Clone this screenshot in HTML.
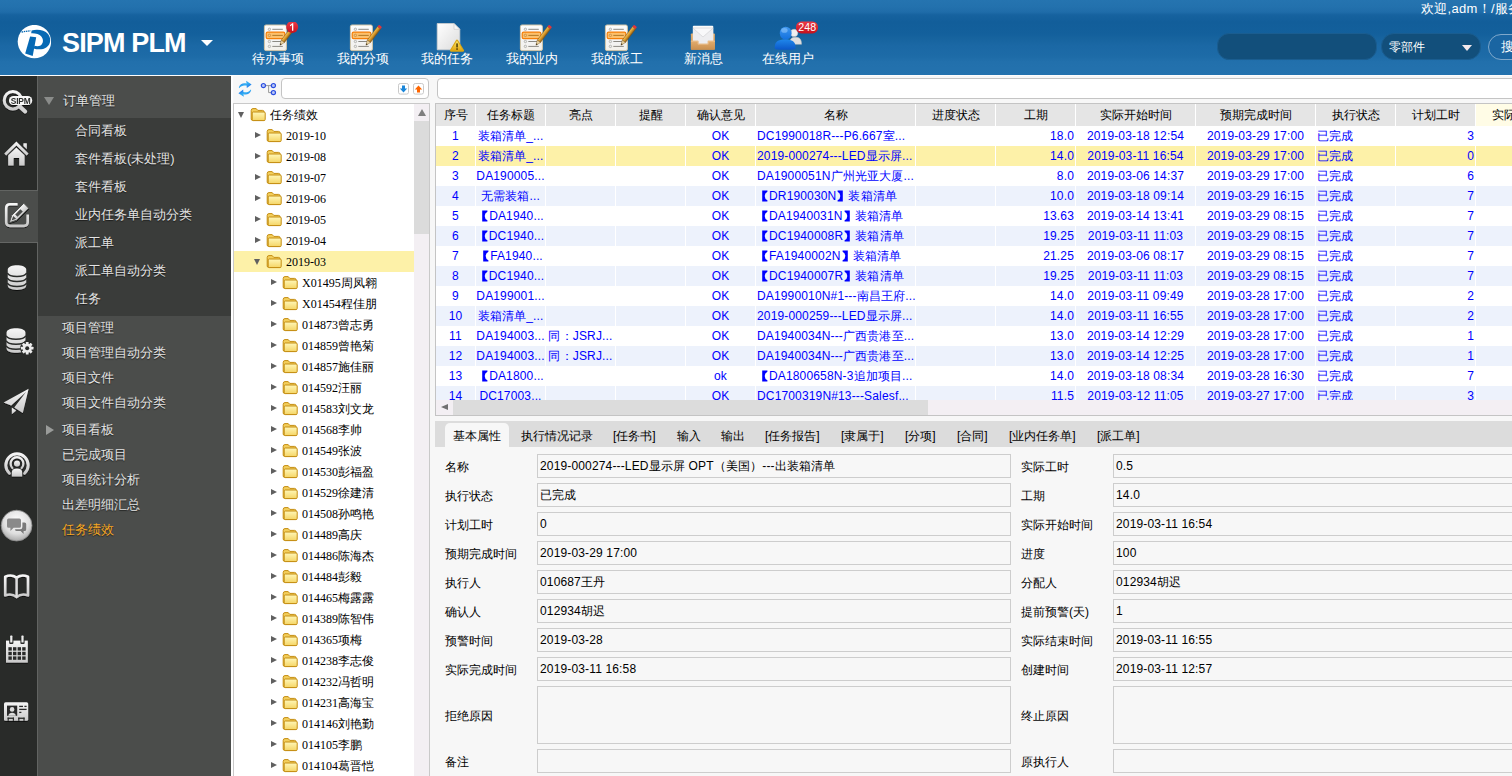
<!DOCTYPE html>
<html lang="zh">
<head>
<meta charset="utf-8">
<title>SIPM PLM</title>
<style>
*{box-sizing:border-box;margin:0;padding:0}
html,body{width:1512px;height:776px;overflow:hidden;background:#fff;font-family:"Liberation Sans",sans-serif;font-size:12px;color:#000}
.abs{position:absolute}
/* ---------- header ---------- */
#hdr{position:absolute;left:0;top:0;width:1512px;height:75px;
 background:linear-gradient(to bottom,#2574b0 0px,#2371ad 7px,#1f6ca9 12px,#16629f 15px,#125e9a 22px,#13609c 34px,#17649f 39px,#1b68a5 46px,#1d6ba7 56px,#2270ac 62px,#2472ae 75px);color:#fff;overflow:hidden}
#hdrline{position:absolute;left:0;top:75px;width:1512px;height:1px;background:#fdfdfd}
#logo{position:absolute;left:17px;top:25px;width:34px;height:34px}
#title{position:absolute;left:62px;top:25px;font-size:27px;font-weight:bold;letter-spacing:-.85px;line-height:36px;white-space:nowrap}
#titlearrow{position:absolute;left:201px;top:40px;width:0;height:0;border-left:6px solid transparent;border-right:6px solid transparent;border-top:6px solid #fff}
.tb{position:absolute;top:22px;width:84px;text-align:center;font-size:13px;line-height:16px;white-space:nowrap}
.tb svg{display:block;margin:0 auto}
.tb span{display:block;margin-top:-3px}
#welcome{position:absolute;left:1421px;top:1px;font-size:13px;line-height:16px;white-space:nowrap;letter-spacing:.3px}
#srch{position:absolute;left:1217px;top:33px;width:160px;height:27px;border-radius:12px;background:#124f7b;border:1px solid #1a5d90}
#sel{position:absolute;left:1381px;top:33px;width:100px;height:27px;border-radius:13px;background:#124f7b;border:1px solid #1a5d90;font-size:12px;line-height:26px;padding-left:7px}
#sel i{position:absolute;left:80px;top:11px;width:0;height:0;border-left:5px solid transparent;border-right:5px solid transparent;border-top:6px solid #f3e9ec}
#btn{position:absolute;left:1488px;top:34px;width:60px;height:26px;border-radius:13px;border:1px solid #7fa8cb;background:#1a65a2;font-size:13px;line-height:24px;padding-left:12px}
/* ---------- icon strip ---------- */
#strip{position:absolute;left:0;top:76px;width:38px;height:700px;background:#292b29;border-right:1px solid #626462}
#strip .act{position:absolute;left:0;top:114px;width:38px;height:53px;background:#4b4d4b;border-top:1px solid #626462;border-bottom:1px solid #646664}
#strip svg{position:absolute}
/* ---------- menu ---------- */
#menu{position:absolute;left:38px;top:76px;width:193px;height:700px;background:#4b4d4b;color:#e4e4e4;font-size:13px;text-shadow:0 1px 1px rgba(0,0,0,.6)}
#menu .h{position:absolute;left:24px;white-space:nowrap;line-height:18px}
#menu .sub{position:absolute;left:0;top:42px;width:193px;height:198px;background:#3a3c3a}
#menu .sub div{position:absolute;left:37px;white-space:nowrap;line-height:18px}
.tri-d{position:absolute;width:0;height:0;border-left:5px solid transparent;border-right:5px solid transparent;border-top:8px solid #8a8c8a}
.tri-r{position:absolute;width:0;height:0;border-top:5px solid transparent;border-bottom:5px solid transparent;border-left:8px solid #9a9c9a}

/* ---------- tree pane ---------- */
#tp{position:absolute;left:233px;top:76px;width:1279px;height:700px;background:#f7f7f7}
#ttb{position:absolute;left:0;top:0;width:197px;height:27px}
.inp{position:absolute;background:#fff;border:1px solid #c4c4c4;border-radius:4px}
#tree{position:absolute;left:233px;top:103px;width:197px;height:680px;background:#fff;border:1px solid #c9c9c9;overflow:hidden;font-family:"Liberation Serif","Liberation Sans",sans-serif;font-size:12px}
#tree .r{position:absolute;left:0;width:181px;height:21px;line-height:21px;white-space:nowrap}
#tree .r.sel{background:#fdf1a8}
#tree .r span{position:absolute;top:1px}
#tree .a{position:absolute;width:0;height:0}
#tree .a.d{border-left:3.5px solid transparent;border-right:3.5px solid transparent;border-top:6.5px solid #606060;top:8px}
#tree .a.rt{border-top:3.8px solid transparent;border-bottom:3.8px solid transparent;border-left:6.8px solid #606060;top:6.7px;margin-left:-.5px}
#tree svg{position:absolute;top:3px}
#vsb{position:absolute;left:180px;top:0;width:16px;height:680px;background:#f3eff3}
#vsb .th{position:absolute;left:0;top:17px;width:16px;height:113px;background:#dbdbdb}
#vsb .up{position:absolute;left:3.5px;top:5px;width:0;height:0;border-left:4px solid transparent;border-right:4px solid transparent;border-bottom:7px solid #7f7f7f}
/* ---------- grid ---------- */
#grid{position:absolute;left:435px;top:103px;width:1100px;height:313px;border:1px solid #c4c4c4;background:#fff;overflow:hidden}
#grid table{border-collapse:separate;border-spacing:0;table-layout:fixed;width:1120px;font-family:"Liberation Sans",sans-serif;font-size:12px;color:#00f}
#grid td,#grid th{border-right:1px solid #fff;height:20px;line-height:20px;padding:0 2px;white-space:nowrap;overflow:hidden;font-weight:normal;font-size:12px}
#grid th{height:22px;line-height:22px;background:#e5e5e5;color:#000;text-align:center;padding:0}
#grid th.y{background:#fffce6}
#grid tr.e td{background:#edf2fc}
#grid tr.s td{background:#fdf1a8}
.bk{width:12px;height:12px;vertical-align:-2px;fill:#00f}
.c{text-align:center}#grid td.rr{text-align:right;padding-right:1px}#grid td.l{text-align:left;padding-left:1px}
#grid td{letter-spacing:.15px}
#grid td.c{padding:0}
#hsb{position:absolute;left:0;top:296px;width:1100px;height:15px;background:#f3eff3}
#hsb .th{position:absolute;left:17px;top:0;width:475px;height:15px;background:#dcdcdc}
#hsb .lf{position:absolute;left:5px;top:4px;width:0;height:0;border-top:3.5px solid transparent;border-bottom:3.5px solid transparent;border-right:7px solid #707070}
/* ---------- tabs + form ---------- */
#tabs{position:absolute;left:435px;top:421px;width:1100px;height:26px;background:#dcdcdc;font-size:12px}
#tabs .on{position:absolute;left:10px;top:2px;width:64px;height:24px;background:#f7f7f7;border-radius:5px 5px 0 0}
#tabs span{position:absolute;top:0;line-height:30px;white-space:nowrap}
#form{position:absolute;left:435px;top:447px;width:1100px;height:329px;font-size:12px}
#form .lb{position:absolute;white-space:nowrap;line-height:16px}
#form .f{letter-spacing:.15px;position:absolute;height:24px;border:1px solid #cdcdcd;background:#f7f7f7;line-height:21px;padding-left:2px;padding-top:1px;white-space:nowrap;overflow:hidden}
</style>
</head>
<body>
<svg width="0" height="0" style="position:absolute">
 <defs>
  <linearGradient id="gpaper" x1="0" y1="0" x2="0" y2="1"><stop offset="0" stop-color="#fdfdfc"/><stop offset=".5" stop-color="#f3f5f8"/><stop offset="1" stop-color="#f4f1ea"/></linearGradient>
  <linearGradient id="gpencil" x1="0" y1="0" x2="1" y2="0"><stop offset="0" stop-color="#f2c25a"/><stop offset=".5" stop-color="#d99a2b"/><stop offset="1" stop-color="#8a5a17"/></linearGradient>
  <linearGradient id="gdoc" x1="0" y1="0" x2="1" y2="1"><stop offset="0" stop-color="#ffffff"/><stop offset="1" stop-color="#dcdcdc"/></linearGradient>
  <linearGradient id="gwarn" x1="0" y1="0" x2="0" y2="1"><stop offset="0" stop-color="#fbe86a"/><stop offset="1" stop-color="#e3a60f"/></linearGradient>
  <linearGradient id="gtray" x1="0" y1="0" x2="0" y2="1"><stop offset="0" stop-color="#e2ad6e"/><stop offset="1" stop-color="#c98f4f"/></linearGradient>
  <linearGradient id="guser" x1="0" y1="0" x2="0" y2="1"><stop offset="0" stop-color="#3f97ee"/><stop offset="1" stop-color="#1270de"/></linearGradient><linearGradient id="guser2" x1="0" y1="0" x2="0" y2="1"><stop offset="0" stop-color="#1f86ea"/><stop offset="1" stop-color="#0b57c8"/></linearGradient>
  <linearGradient id="gbadge" x1="0" y1="0" x2="0" y2="1"><stop offset="0" stop-color="#ee3b46"/><stop offset="1" stop-color="#c4121e"/></linearGradient>
  <linearGradient id="gi" x1="0" y1="0" x2="0" y2="1"><stop offset="0" stop-color="#f6f6f6"/><stop offset="1" stop-color="#c9c9c9"/></linearGradient>
  <radialGradient id="gchat" cx=".5" cy=".35" r=".7"><stop offset="0" stop-color="#ffffff"/><stop offset=".6" stop-color="#dedede"/><stop offset="1" stop-color="#9f9f9f"/></radialGradient>
  <filter id="sh" x="-20%" y="-20%" width="140%" height="150%"><feDropShadow dx="0" dy="1" stdDeviation=".6" flood-color="#000" flood-opacity=".7"/></filter>
  <linearGradient id="gfo" x1="0" y1="0" x2="0" y2="1"><stop offset="0" stop-color="#fff7b8"/><stop offset="1" stop-color="#f5d565"/></linearGradient>
  <symbol id="fold" viewBox="0 0 16 15"><path d="M1.2 3.4 Q1.2 1.6 3 1.6 H6.2 L7.8 3.4 H12.6 Q14 3.4 14 4.8 V12 Q14 13.4 12.6 13.4 H2.6 Q1.2 13.4 1.2 12 Z" fill="#f3cf5c" stroke="#c48d12" stroke-width="1"/><path d="M2.2 6 Q2.2 5 3.2 5 H14 Q15.2 5 15.2 6 V12.4 Q15.2 13.6 14 13.6 H3.2 Q2.2 13.6 2.2 12.4 Z" fill="url(#gfo)" stroke="#c48d12" stroke-width="1"/></symbol>
  <symbol id="note" viewBox="0 0 40 32">
   <rect x="2.4" y="3" width="22" height="25.6" rx="1.6" fill="url(#gpaper)" stroke="#d3c5a6" stroke-width="1"/>
   <rect x="4.2" y="10.1" width="18.6" height="6.6" rx="1.4" fill="#fcc06c" stroke="#f57f08" stroke-width="1.2"/>
   <g stroke="#8c8a84" stroke-width="1"><line x1="10.3" y1="7.3" x2="20.8" y2="7.3"/><line x1="10.3" y1="13.4" x2="20.8" y2="13.4" stroke="#b07a2a"/><line x1="10.3" y1="19.5" x2="20.8" y2="19.5"/><line x1="10.3" y1="24.4" x2="20.8" y2="24.4"/></g>
   <g fill="#ececec" stroke="#a9a9a4" stroke-width=".8"><circle cx="7.4" cy="7.3" r="1.2"/><circle cx="7.4" cy="13.4" r="1.2" fill="#f3c27e" stroke="#c98a3a"/><circle cx="7.4" cy="19.5" r="1.2"/><circle cx="7.4" cy="24.4" r="1.2"/></g>
   <g transform="translate(31.2,5.6) rotate(37)"><rect x="-2" y="0" width="4" height="17.2" fill="url(#gpencil)" stroke="#7a5216" stroke-width=".5"/><path d="M-2 17.2 L0 22 L2 17.2 Z" fill="#ecd6a6" stroke="#7a5216" stroke-width=".4"/><path d="M-.8 20.2 L0 22 L.8 20.2 Z" fill="#3a2a10"/><rect x="-2" y="-2.2" width="4" height="2.6" rx="1" fill="#e0343c"/></g>
  </symbol>
 </defs>
</svg>

<div id="hdr">
  <svg id="logo" viewBox="0 0 34 34"><circle cx="17.4" cy="16.6" r="16.7" fill="#fff"/><path d="M14.6 5.5 C20 4 27.6 4.8 31 9 C34.4 13.3 33.8 19.2 29.6 22.2 C25.8 24.9 20.5 24.7 16.6 23.4 L17.4 20.7 C21 21.9 24.6 21 25.7 17.4 C26.8 13.5 24 10.3 20.5 9 C18.5 8.3 16 8 14.2 8.2 Z" fill="#0669b4"/><path d="M13.1 11.4 L19.2 12.3 L15.7 31 L8.2 28.4 Z" fill="#0669b4"/><path d="M4.6 7 L13.6 5.7" stroke="#0669b4" stroke-width="1.3" stroke-dasharray="1.5 .7" fill="none"/></svg>
  <div id="title">SIPM PLM</div>
  <div id="titlearrow"></div>

  <div class="tb" style="left:236px"><svg width="40" height="32" style="margin-left:26px"><use href="#note"/><circle cx="30.2" cy="5.1" r="6" fill="url(#gbadge)"/><path d="M30.1 1.3 H31.3 V8.8 H30 V3 Q29.2 3.8 28 4.2 V3.1 Q29.4 2.5 30.1 1.3 Z" fill="#fff"/></svg><span>待办事项</span></div>
  <div class="tb" style="left:321px"><svg width="40" height="32" style="margin-left:27px"><use href="#note"/></svg><span>我的分项</span></div>
  <div class="tb" style="left:405px"><svg width="40" height="32" style="margin-left:26px" viewBox="0 0 40 32"><path d="M6.2 1.5 H23 L28.8 7.3 V27.8 H6.2 Z" fill="url(#gdoc)" stroke="#cfcfcf" stroke-width=".8"/><path d="M23 1.5 V7.3 H28.8 Z" fill="#f7f7f7" stroke="#c8c8c8" stroke-width=".6"/><path d="M26 18.6 L32 28.6 H20 Z" fill="url(#gwarn)" stroke="#d9a514" stroke-width="2.2" stroke-linejoin="round"/><path d="M26 18.6 L32 28.6 H20 Z" fill="url(#gwarn)"/><rect x="25.3" y="21.4" width="1.5" height="4" fill="#4a3806"/><rect x="25.3" y="26.3" width="1.5" height="1.5" fill="#4a3806"/></svg><span>我的任务</span></div>
  <div class="tb" style="left:490px"><svg width="40" height="32" style="margin-left:28px"><use href="#note"/></svg><span>我的业内</span></div>
  <div class="tb" style="left:575px"><svg width="40" height="32" style="margin-left:28px"><use href="#note"/></svg><span>我的派工</span></div>
  <div class="tb" style="left:661px"><svg width="40" height="32" style="margin-left:22px;overflow:visible" viewBox="0 0 40 32"><rect x="7.9" y="11.4" width="24" height="16.4" rx=".8" fill="url(#gtray)"/><rect x="9.9" y="3.7" width="20.3" height="18.6" rx=".8" fill="#fbfbfb"/><rect x="9.9" y="6" width="20.3" height="16" fill="#ededf0"/><path d="M9.9 6 L20 15 L30.2 6 Z" fill="#f8f8fa" stroke="#d2d2d6" stroke-width=".7"/><path d="M7.9 18.8 H15.4 V21.8 H24.8 V18.8 H31.9 V27 Q31.9 27.8 31.1 27.8 H8.7 Q7.9 27.8 7.9 27 Z" fill="url(#gtray)"/><path d="M7.9 19.2 H15 V22.2 H25.2 V19.2 H31.9" fill="none" stroke="#edc392" stroke-width=".8"/></svg><span>新消息</span></div>
  <div class="tb" style="left:746px"><svg width="52" height="32" style="margin-left:26px;overflow:visible" viewBox="0 0 52 32"><circle cx="22.1" cy="10.9" r="3.7" fill="#f0f0f0" stroke="#c4c4c4" stroke-width=".5"/><path d="M17.6 22.3 C17.6 17 19.5 15.3 23.5 15.3 C27.5 15.3 29.5 17 29.5 22.3 Z" fill="#e0e0e0" stroke="#bcbcbc" stroke-width=".5"/><ellipse cx="13.7" cy="11.2" rx="5.9" ry="6.5" fill="url(#guser)"/><path d="M2.7 26 C2.7 19.5 6 17.6 13.2 17.6 C20.4 17.6 23.6 19.5 23.6 26 C23.6 27.3 21 27.8 13.2 27.8 C5.4 27.8 2.7 27.3 2.7 26 Z" fill="url(#guser2)"/><ellipse cx="12.4" cy="8.4" rx="3.2" ry="2.4" fill="#8fc6fb" opacity=".6"/><rect x="24" y="-.6" width="22" height="12" rx="5.5" fill="url(#gbadge)"/><text x="35.2" y="9" font-size="10.6" style="font-family:'Liberation Sans',sans-serif" fill="#fff" text-anchor="middle">248</text></svg><span>在线用户</span></div>
  <div id="welcome">欢迎,adm！/服务</div>
  <div id="srch"></div>
  <div id="sel">零部件<i></i></div>
  <div id="btn">搜</div>
</div>
<div id="hdrline"></div>

<div id="strip"><div class="act"></div>
 <!-- search SIPM : page y 87-116 -->
 <svg style="left:0;top:10px" width="38" height="32" viewBox="0 0 38 32" filter="url(#sh)"><circle cx="12.9" cy="14.2" r="8.7" fill="none" stroke="url(#gi)" stroke-width="3"/><line x1="19.8" y1="20.6" x2="25.2" y2="25.4" stroke="#d4d4d4" stroke-width="4" stroke-linecap="round"/><rect x="9" y="10" width="23.2" height="9" rx="4.5" fill="#f8f8f8"/><text x="20.6" y="17.5" font-size="8.4" font-weight="bold" text-anchor="middle" fill="#2b2d2b" style="font-family:'Liberation Sans',sans-serif;letter-spacing:-.2px">SIPM</text></svg>
 <!-- home : y 141-166 -->
 <svg style="left:2px;top:62px" width="32" height="32" viewBox="0 0 32 32" filter="url(#sh)"><path d="M2.2 15.6 L14.4 3.6 L26.6 15.6 L24.6 17.6 L14.4 7.6 L4.2 17.6 Z" fill="url(#gi)"/><path d="M6.2 17.2 L14.4 9.4 L22.6 17.2 V27.6 H17.2 V20 H11.6 V27.6 H6.2 Z" fill="url(#gi)"/><path d="M21.4 5.2 H24.8 V11.2 L21.4 7.9 Z" fill="url(#gi)"/></svg>
 <!-- edit : y 203-228 -->
 <svg style="left:2px;top:124px" width="32" height="32" viewBox="0 0 32 32" filter="url(#sh)"><path d="M15.6 4.3 H8 Q4.2 4.3 4.2 8.1 V22.1 Q4.2 25.9 8 25.9 H21.9 Q25.7 25.9 25.7 22.1 V14.6" fill="none" stroke="url(#gi)" stroke-width="2.6" stroke-linecap="butt"/><g transform="translate(7.3,22.7) rotate(-45)"><path d="M0 0 L7 -3.5 H24 V3.5 H7 Z" fill="url(#gi)" stroke="#4b4d4b" stroke-width=".9"/><path d="M3.2 0 L7.6 -2 V2 Z" fill="#4b4d4b"/><rect x="10" y="-1.7" width="7.4" height="3.4" fill="#4b4d4b"/></g></svg>
 <!-- db : y 265-290 -->
 <svg style="left:2px;top:186px" width="32" height="32" viewBox="0 0 32 32"><g filter="url(#sh)"><path d="M5.8 7.6 C5.8 1.8 24.2 1.8 24.2 7.6 V23.6 C24.2 29.4 5.8 29.4 5.8 23.6 Z" fill="url(#gi)"/></g><g fill="none" stroke="#292b29" stroke-width="1.4"><path d="M5.4 11 C7.4 15.6 22.6 15.6 24.6 11"/><path d="M5.4 16 C7.4 20.6 22.6 20.6 24.6 16"/><path d="M5.4 21 C7.4 25.6 22.6 25.6 24.6 21"/></g></svg>
 <!-- db gear : y 328-354 -->
 <svg style="left:2px;top:249px" width="34" height="32" viewBox="0 0 34 32"><g filter="url(#sh)"><path d="M4.6 7.4 C4.6 1.8 23.4 1.8 23.4 7.4 V23.4 C23.4 29.2 4.6 29.2 4.6 23.4 Z" fill="url(#gi)"/></g><g fill="none" stroke="#292b29" stroke-width="1.4"><path d="M4.2 10.8 C6.2 15.4 21.8 15.4 23.8 10.8"/><path d="M4.2 15.8 C6.2 20.4 21.8 20.4 23.8 15.8"/><path d="M4.2 20.8 C6.2 25.4 21.8 25.4 23.8 20.8"/></g><g transform="translate(25.2,23.2)"><circle r="7" fill="#292b29"/><g fill="#ececec"><circle r="4.5"/><g id="t"><rect x="-1.4" y="-6.3" width="2.8" height="12.6" rx=".5"/></g><use href="#t" transform="rotate(45)"/><use href="#t" transform="rotate(90)"/><use href="#t" transform="rotate(135)"/></g><circle r="2" fill="#292b29"/></g></svg>
 <!-- plane : y 389-414 -->
 <svg style="left:1.3px;top:309px" width="32" height="32" viewBox="0 0 32 32" filter="url(#sh)"><path d="M2.6 17.6 L27.6 3.8 L21.8 28 L13.2 22.4 L25.2 6.8 L10.2 20.6 Z" fill="url(#gi)"/><path d="M10.8 22.6 L15.2 25.4 L10.8 29.2 Z" fill="url(#gi)"/></svg>
 <!-- broadcast : y 451-476 -->
 <svg style="left:2px;top:372px" width="32" height="32" viewBox="0 0 32 32" filter="url(#sh)"><path d="M7.4 25.2 A11.2 11.2 0 1 1 22.6 25.2" fill="none" stroke="url(#gi)" stroke-width="2.9" stroke-linecap="round"/><path d="M10.4 20 A6.4 6.4 0 1 1 19.6 20" fill="none" stroke="url(#gi)" stroke-width="2.2" stroke-linecap="round"/><circle cx="15" cy="15.4" r="3" fill="url(#gi)"/><path d="M9.8 28.4 V24.4 Q9.8 20.6 15 20.6 Q20.2 20.6 20.2 24.4 V28.4 Z" fill="url(#gi)"/></svg>
 <!-- chat round : y 510-540 -->
 <svg style="left:0;top:433px" width="36" height="34" viewBox="0 0 36 34"><circle cx="16.6" cy="16.6" r="15.4" fill="url(#gchat)" stroke="#8a8a8a" stroke-width=".8"/><path d="M8.6 9.6 H19.4 Q21 9.6 21 11.2 V17.2 Q21 18.8 19.4 18.8 H13.6 L10.4 22 V18.8 H8.6 Q7 18.8 7 17.2 V11.2 Q7 9.6 8.6 9.6 Z" fill="#8a8a8a"/><path d="M22.4 13.4 H24.6 Q26.2 13.4 26.2 15 V20.4 Q26.2 22 24.6 22 H23.6 V25 L20.6 22 H16.4 Q15 22 14.8 20.6 L16 20.2 H20.2 Q22.4 20.2 22.4 18 Z" fill="#7a7a7a"/></svg>
 <!-- book : y 575-599 -->
 <svg style="left:2px;top:496px" width="32" height="32" viewBox="0 0 32 32" filter="url(#sh)"><path d="M3.2 4.6 C7 3 11.6 3.4 14.6 5.6 C17.6 3.4 22.2 3 26 4.6 V23.4 C22.2 22 17.6 22.6 14.6 25 C11.6 22.6 7 22 3.2 23.4 Z" fill="none" stroke="url(#gi)" stroke-width="2.6" stroke-linejoin="round"/><line x1="14.6" y1="5.6" x2="14.6" y2="24.6" stroke="#dedede" stroke-width="2.4"/><path d="M13 24 L14.6 26.6 L16.2 24 Z" fill="#ddd"/></svg>
 <!-- calendar : y 636-663 -->
 <svg style="left:2px;top:558px" width="32" height="32" viewBox="0 0 32 32" filter="url(#sh)"><path d="M4 6.6 H25.8 V28.6 H4 Z" fill="url(#gi)"/><g fill="#292b29"><rect x="7.2" y="2.4" width="4.2" height="7.6" rx="1"/><rect x="18.4" y="2.4" width="4.2" height="7.6" rx="1"/></g><g fill="#ededed"><rect x="8.2" y="1.6" width="2.2" height="7" rx=".6"/><rect x="19.4" y="1.6" width="2.2" height="7" rx=".6"/></g><g fill="#292b29"><rect x="6.4" y="13.2" width="3.4" height="3.4"/><rect x="11" y="13.2" width="3.4" height="3.4"/><rect x="15.6" y="13.2" width="3.4" height="3.4"/><rect x="20.2" y="13.2" width="3.4" height="3.4"/><rect x="6.4" y="17.8" width="3.4" height="3.4"/><rect x="11" y="17.8" width="3.4" height="3.4"/><rect x="15.6" y="17.8" width="3.4" height="3.4"/><rect x="20.2" y="17.8" width="3.4" height="3.4"/><rect x="6.4" y="22.4" width="3.4" height="3.4"/><rect x="11" y="22.4" width="3.4" height="3.4"/><rect x="15.6" y="22.4" width="3.4" height="3.4"/><rect x="20.2" y="22.4" width="3.4" height="3.4"/></g></svg>
 <!-- id card : y 702-721 -->
 <svg style="left:2px;top:620px" width="32" height="32" viewBox="0 0 32 32" filter="url(#sh)"><rect x="2" y="6.2" width="24.2" height="18.6" rx="1.6" fill="url(#gi)"/><rect x="5" y="9.6" width="10.2" height="10.2" fill="#292b29"/><circle cx="10.1" cy="13.4" r="2.3" fill="#dcdcdc"/><path d="M6.4 19.8 C6.4 15.8 13.8 15.8 13.8 19.8 Z" fill="#dcdcdc"/><g stroke="#292b29" stroke-width="1.3"><line x1="17.2" y1="10.4" x2="21" y2="10.4"/><line x1="22.4" y1="10.4" x2="24.6" y2="10.4"/><line x1="17.2" y1="13.4" x2="24.6" y2="13.4"/><line x1="17.2" y1="16.4" x2="19.4" y2="16.4"/></g><g fill="#292b29"><rect x="5.6" y="21.6" width="6.4" height="1.3"/><rect x="5.6" y="21.6" width="1.2" height="3.2"/><rect x="10.8" y="21.6" width="1.2" height="3.2"/><rect x="16.2" y="21.6" width="6.4" height="1.3"/><rect x="16.2" y="21.6" width="1.2" height="3.2"/><rect x="21.4" y="21.6" width="1.2" height="3.2"/></g></svg>
</div>

<div id="menu">
  <i class="tri-d" style="left:6px;top:21px"></i>
  <div class="h" style="top:16px;left:25px">订单管理</div>
  <div class="sub">
    <div style="top:4px">合同看板</div>
    <div style="top:32px">套件看板(未处理)</div>
    <div style="top:60px">套件看板</div>
    <div style="top:88px">业内任务单自动分类</div>
    <div style="top:116px">派工单</div>
    <div style="top:144px">派工单自动分类</div>
    <div style="top:172px">任务</div>
  </div>
  <div class="h" style="top:243px">项目管理</div>
  <div class="h" style="top:268px">项目管理自动分类</div>
  <div class="h" style="top:293px">项目文件</div>
  <div class="h" style="top:318px">项目文件自动分类</div>
  <i class="tri-r" style="left:8px;top:349px"></i>
  <div class="h" style="top:345px">项目看板</div>
  <div class="h" style="top:370px">已完成项目</div>
  <div class="h" style="top:395px">项目统计分析</div>
  <div class="h" style="top:420px">出差明细汇总</div>
  <div class="h" style="top:445px;color:#f5a623">任务绩效</div>
</div>

<div id="tp">
 <div id="ttb">
  <svg style="position:absolute;left:4px;top:4px" width="16" height="18" viewBox="0 0 16 18"><defs><linearGradient id="grf" x1="0" y1="0" x2="1" y2="1"><stop offset="0" stop-color="#1a5cee"/><stop offset=".5" stop-color="#34b2f2"/><stop offset="1" stop-color="#1a5cee"/></linearGradient></defs><path d="M1.8 7.6 C2.6 3.6 6.6 2.6 9.6 3.4 L9.2 .8 L14.6 4.4 L9.8 8 L9.6 5.6 C6.8 5 4 5.6 2.2 8.2 Z" fill="url(#grf)"/><path d="M14.2 10 C13.4 14 9.4 15 6.4 14.2 L6.8 16.8 L1.4 13.2 L6.2 9.6 L6.4 12 C9.2 12.6 12 12 13.8 9.4 Z" fill="url(#grf)"/></svg>
  <svg style="position:absolute;left:27px;top:5px" width="18" height="16" viewBox="0 0 18 16"><path d="M4 4.6 H13 M8.6 4.6 V11.6 H13" fill="none" stroke="#9a9a9a" stroke-width="1"/><g fill="#b9c6f6" stroke="#2b4fe0" stroke-width="1.2"><circle cx="3.4" cy="4.6" r="2.1"/><circle cx="13.4" cy="4.6" r="2.1"/><circle cx="13.4" cy="11.6" r="2.1"/></g></svg>
  <div class="inp" style="left:48px;top:2px;width:148px;height:21px"></div>
  <svg style="position:absolute;left:165px;top:7px" width="26" height="12" viewBox="0 0 26 12"><rect x=".5" y=".5" width="10" height="10.6" rx="1.8" fill="#fff" stroke="#c9c9c9"/><path d="M4 2.4 H7 V5.4 H9.2 L5.5 9.4 L1.8 5.4 H4 Z" fill="#1a86d9"/><rect x="15.5" y=".5" width="10" height="10.6" rx="1.8" fill="#fff" stroke="#c9c9c9"/><path d="M19 9.4 H22 V6.4 H24.2 L20.5 2.4 L16.8 6.4 H19 Z" fill="#ff6600"/></svg>
 </div>
 <div class="inp" style="left:204px;top:2px;width:1100px;height:21px"></div>
</div>
<div id="tree">
<div class="r" style="top:0px"><i class="a d" style="left:4px"></i><svg width="16" height="15" viewBox="0 0 16 15" style="left:16px"><use href="#fold"/></svg><span style="left:36px">任务绩效</span></div>
<div class="r" style="top:21px"><i class="a rt" style="left:21px"></i><svg width="16" height="15" viewBox="0 0 16 15" style="left:32px"><use href="#fold"/></svg><span style="left:52px">2019-10</span></div>
<div class="r" style="top:42px"><i class="a rt" style="left:21px"></i><svg width="16" height="15" viewBox="0 0 16 15" style="left:32px"><use href="#fold"/></svg><span style="left:52px">2019-08</span></div>
<div class="r" style="top:63px"><i class="a rt" style="left:21px"></i><svg width="16" height="15" viewBox="0 0 16 15" style="left:32px"><use href="#fold"/></svg><span style="left:52px">2019-07</span></div>
<div class="r" style="top:84px"><i class="a rt" style="left:21px"></i><svg width="16" height="15" viewBox="0 0 16 15" style="left:32px"><use href="#fold"/></svg><span style="left:52px">2019-06</span></div>
<div class="r" style="top:105px"><i class="a rt" style="left:21px"></i><svg width="16" height="15" viewBox="0 0 16 15" style="left:32px"><use href="#fold"/></svg><span style="left:52px">2019-05</span></div>
<div class="r" style="top:126px"><i class="a rt" style="left:21px"></i><svg width="16" height="15" viewBox="0 0 16 15" style="left:32px"><use href="#fold"/></svg><span style="left:52px">2019-04</span></div>
<div class="r sel" style="top:147px"><i class="a d" style="left:20px"></i><svg width="16" height="15" viewBox="0 0 16 15" style="left:32px"><use href="#fold"/></svg><span style="left:52px">2019-03</span></div>
<div class="r" style="top:168px"><i class="a rt" style="left:37px"></i><svg width="16" height="15" viewBox="0 0 16 15" style="left:48px"><use href="#fold"/></svg><span style="left:68px">X01495周凤翱</span></div>
<div class="r" style="top:189px"><i class="a rt" style="left:37px"></i><svg width="16" height="15" viewBox="0 0 16 15" style="left:48px"><use href="#fold"/></svg><span style="left:68px">X01454程佳朋</span></div>
<div class="r" style="top:210px"><i class="a rt" style="left:37px"></i><svg width="16" height="15" viewBox="0 0 16 15" style="left:48px"><use href="#fold"/></svg><span style="left:68px">014873曾志勇</span></div>
<div class="r" style="top:231px"><i class="a rt" style="left:37px"></i><svg width="16" height="15" viewBox="0 0 16 15" style="left:48px"><use href="#fold"/></svg><span style="left:68px">014859曾艳菊</span></div>
<div class="r" style="top:252px"><i class="a rt" style="left:37px"></i><svg width="16" height="15" viewBox="0 0 16 15" style="left:48px"><use href="#fold"/></svg><span style="left:68px">014857施佳丽</span></div>
<div class="r" style="top:273px"><i class="a rt" style="left:37px"></i><svg width="16" height="15" viewBox="0 0 16 15" style="left:48px"><use href="#fold"/></svg><span style="left:68px">014592汪丽</span></div>
<div class="r" style="top:294px"><i class="a rt" style="left:37px"></i><svg width="16" height="15" viewBox="0 0 16 15" style="left:48px"><use href="#fold"/></svg><span style="left:68px">014583刘文龙</span></div>
<div class="r" style="top:315px"><i class="a rt" style="left:37px"></i><svg width="16" height="15" viewBox="0 0 16 15" style="left:48px"><use href="#fold"/></svg><span style="left:68px">014568李帅</span></div>
<div class="r" style="top:336px"><i class="a rt" style="left:37px"></i><svg width="16" height="15" viewBox="0 0 16 15" style="left:48px"><use href="#fold"/></svg><span style="left:68px">014549张波</span></div>
<div class="r" style="top:357px"><i class="a rt" style="left:37px"></i><svg width="16" height="15" viewBox="0 0 16 15" style="left:48px"><use href="#fold"/></svg><span style="left:68px">014530彭福盈</span></div>
<div class="r" style="top:378px"><i class="a rt" style="left:37px"></i><svg width="16" height="15" viewBox="0 0 16 15" style="left:48px"><use href="#fold"/></svg><span style="left:68px">014529徐建清</span></div>
<div class="r" style="top:399px"><i class="a rt" style="left:37px"></i><svg width="16" height="15" viewBox="0 0 16 15" style="left:48px"><use href="#fold"/></svg><span style="left:68px">014508孙鸣艳</span></div>
<div class="r" style="top:420px"><i class="a rt" style="left:37px"></i><svg width="16" height="15" viewBox="0 0 16 15" style="left:48px"><use href="#fold"/></svg><span style="left:68px">014489高庆</span></div>
<div class="r" style="top:441px"><i class="a rt" style="left:37px"></i><svg width="16" height="15" viewBox="0 0 16 15" style="left:48px"><use href="#fold"/></svg><span style="left:68px">014486陈海杰</span></div>
<div class="r" style="top:462px"><i class="a rt" style="left:37px"></i><svg width="16" height="15" viewBox="0 0 16 15" style="left:48px"><use href="#fold"/></svg><span style="left:68px">014484彭毅</span></div>
<div class="r" style="top:483px"><i class="a rt" style="left:37px"></i><svg width="16" height="15" viewBox="0 0 16 15" style="left:48px"><use href="#fold"/></svg><span style="left:68px">014465梅露露</span></div>
<div class="r" style="top:504px"><i class="a rt" style="left:37px"></i><svg width="16" height="15" viewBox="0 0 16 15" style="left:48px"><use href="#fold"/></svg><span style="left:68px">014389陈智伟</span></div>
<div class="r" style="top:525px"><i class="a rt" style="left:37px"></i><svg width="16" height="15" viewBox="0 0 16 15" style="left:48px"><use href="#fold"/></svg><span style="left:68px">014365项梅</span></div>
<div class="r" style="top:546px"><i class="a rt" style="left:37px"></i><svg width="16" height="15" viewBox="0 0 16 15" style="left:48px"><use href="#fold"/></svg><span style="left:68px">014238李志俊</span></div>
<div class="r" style="top:567px"><i class="a rt" style="left:37px"></i><svg width="16" height="15" viewBox="0 0 16 15" style="left:48px"><use href="#fold"/></svg><span style="left:68px">014232冯哲明</span></div>
<div class="r" style="top:588px"><i class="a rt" style="left:37px"></i><svg width="16" height="15" viewBox="0 0 16 15" style="left:48px"><use href="#fold"/></svg><span style="left:68px">014231高海宝</span></div>
<div class="r" style="top:609px"><i class="a rt" style="left:37px"></i><svg width="16" height="15" viewBox="0 0 16 15" style="left:48px"><use href="#fold"/></svg><span style="left:68px">014146刘艳勤</span></div>
<div class="r" style="top:630px"><i class="a rt" style="left:37px"></i><svg width="16" height="15" viewBox="0 0 16 15" style="left:48px"><use href="#fold"/></svg><span style="left:68px">014105李鹏</span></div>
<div class="r" style="top:651px"><i class="a rt" style="left:37px"></i><svg width="16" height="15" viewBox="0 0 16 15" style="left:48px"><use href="#fold"/></svg><span style="left:68px">014104葛晋恺</span></div>
 <div id="vsb"><div class="th"></div><i class="up"></i></div>
</div>
<div id="grid"><table cellspacing="0" cellpadding="0"><colgroup><col style="width:40px"><col style="width:70px"><col style="width:70px"><col style="width:70px"><col style="width:70px"><col style="width:160px"><col style="width:80px"><col style="width:80px"><col style="width:120px"><col style="width:120px"><col style="width:80px"><col style="width:80px"><col style="width:80px"></colgroup><tr><th>序号</th><th>任务标题</th><th>亮点</th><th>提醒</th><th>确认意见</th><th>名称</th><th>进度状态</th><th>工期</th><th>实际开始时间</th><th>预期完成时间</th><th>执行状态</th><th>计划工时</th><th class="y">实际工时</th></tr><tr><td class="c">1</td><td class="c">装箱清单_...</td><td class="c"></td><td class="c"></td><td class="c">OK</td><td class="l">DC1990018R---P6.667室...</td><td class="c"></td><td class="rr">18.0</td><td class="c">2019-03-18 12:54</td><td class="c">2019-03-29 17:00</td><td class="l">已完成</td><td class="rr">3</td><td class="rr"></td></tr><tr class="s"><td class="c">2</td><td class="c">装箱清单_...</td><td class="c"></td><td class="c"></td><td class="c">OK</td><td class="l">2019-000274---LED显示屏...</td><td class="c"></td><td class="rr">14.0</td><td class="c">2019-03-11 16:54</td><td class="c">2019-03-29 17:00</td><td class="l">已完成</td><td class="rr">0</td><td class="rr"></td></tr><tr><td class="c">3</td><td class="c">DA190005...</td><td class="c"></td><td class="c"></td><td class="c">OK</td><td class="l">DA1900051N广州光亚大厦...</td><td class="c"></td><td class="rr">8.0</td><td class="c">2019-03-06 14:37</td><td class="c">2019-03-29 17:00</td><td class="l">已完成</td><td class="rr">6</td><td class="rr"></td></tr><tr class="e"><td class="c">4</td><td class="c">无需装箱...</td><td class="c"></td><td class="c"></td><td class="c">OK</td><td class="l"><svg class="bk" viewBox="0 0 12 12"><path d="M5.2 .6 H10.4 V1.7 Q7.7 3.1 7.7 6 Q7.7 8.9 10.4 10.3 V11.4 H5.2 Z"/></svg>DR190030N<svg class="bk" viewBox="0 0 12 12"><path d="M6.8 .6 H1.6 V1.7 Q4.3 3.1 4.3 6 Q4.3 8.9 1.6 10.3 V11.4 H6.8 Z"/></svg>装箱清单</td><td class="c"></td><td class="rr">10.0</td><td class="c">2019-03-18 09:14</td><td class="c">2019-03-29 16:15</td><td class="l">已完成</td><td class="rr">7</td><td class="rr"></td></tr><tr><td class="c">5</td><td class="c"><svg class="bk" viewBox="0 0 12 12"><path d="M5.2 .6 H10.4 V1.7 Q7.7 3.1 7.7 6 Q7.7 8.9 10.4 10.3 V11.4 H5.2 Z"/></svg>DA1940...</td><td class="c"></td><td class="c"></td><td class="c">OK</td><td class="l"><svg class="bk" viewBox="0 0 12 12"><path d="M5.2 .6 H10.4 V1.7 Q7.7 3.1 7.7 6 Q7.7 8.9 10.4 10.3 V11.4 H5.2 Z"/></svg>DA1940031N<svg class="bk" viewBox="0 0 12 12"><path d="M6.8 .6 H1.6 V1.7 Q4.3 3.1 4.3 6 Q4.3 8.9 1.6 10.3 V11.4 H6.8 Z"/></svg>装箱清单</td><td class="c"></td><td class="rr">13.63</td><td class="c">2019-03-14 13:41</td><td class="c">2019-03-29 08:15</td><td class="l">已完成</td><td class="rr">7</td><td class="rr"></td></tr><tr class="e"><td class="c">6</td><td class="c"><svg class="bk" viewBox="0 0 12 12"><path d="M5.2 .6 H10.4 V1.7 Q7.7 3.1 7.7 6 Q7.7 8.9 10.4 10.3 V11.4 H5.2 Z"/></svg>DC1940...</td><td class="c"></td><td class="c"></td><td class="c">OK</td><td class="l"><svg class="bk" viewBox="0 0 12 12"><path d="M5.2 .6 H10.4 V1.7 Q7.7 3.1 7.7 6 Q7.7 8.9 10.4 10.3 V11.4 H5.2 Z"/></svg>DC1940008R<svg class="bk" viewBox="0 0 12 12"><path d="M6.8 .6 H1.6 V1.7 Q4.3 3.1 4.3 6 Q4.3 8.9 1.6 10.3 V11.4 H6.8 Z"/></svg>装箱清单</td><td class="c"></td><td class="rr">19.25</td><td class="c">2019-03-11 11:03</td><td class="c">2019-03-29 08:15</td><td class="l">已完成</td><td class="rr">7</td><td class="rr"></td></tr><tr><td class="c">7</td><td class="c"><svg class="bk" viewBox="0 0 12 12"><path d="M5.2 .6 H10.4 V1.7 Q7.7 3.1 7.7 6 Q7.7 8.9 10.4 10.3 V11.4 H5.2 Z"/></svg>FA1940...</td><td class="c"></td><td class="c"></td><td class="c">OK</td><td class="l"><svg class="bk" viewBox="0 0 12 12"><path d="M5.2 .6 H10.4 V1.7 Q7.7 3.1 7.7 6 Q7.7 8.9 10.4 10.3 V11.4 H5.2 Z"/></svg>FA1940002N<svg class="bk" viewBox="0 0 12 12"><path d="M6.8 .6 H1.6 V1.7 Q4.3 3.1 4.3 6 Q4.3 8.9 1.6 10.3 V11.4 H6.8 Z"/></svg>装箱清单</td><td class="c"></td><td class="rr">21.25</td><td class="c">2019-03-06 08:17</td><td class="c">2019-03-29 08:15</td><td class="l">已完成</td><td class="rr">7</td><td class="rr"></td></tr><tr class="e"><td class="c">8</td><td class="c"><svg class="bk" viewBox="0 0 12 12"><path d="M5.2 .6 H10.4 V1.7 Q7.7 3.1 7.7 6 Q7.7 8.9 10.4 10.3 V11.4 H5.2 Z"/></svg>DC1940...</td><td class="c"></td><td class="c"></td><td class="c">OK</td><td class="l"><svg class="bk" viewBox="0 0 12 12"><path d="M5.2 .6 H10.4 V1.7 Q7.7 3.1 7.7 6 Q7.7 8.9 10.4 10.3 V11.4 H5.2 Z"/></svg>DC1940007R<svg class="bk" viewBox="0 0 12 12"><path d="M6.8 .6 H1.6 V1.7 Q4.3 3.1 4.3 6 Q4.3 8.9 1.6 10.3 V11.4 H6.8 Z"/></svg>装箱清单</td><td class="c"></td><td class="rr">19.25</td><td class="c">2019-03-11 11:03</td><td class="c">2019-03-29 08:15</td><td class="l">已完成</td><td class="rr">7</td><td class="rr"></td></tr><tr><td class="c">9</td><td class="c">DA199001...</td><td class="c"></td><td class="c"></td><td class="c">OK</td><td class="l">DA1990010N#1---南昌王府...</td><td class="c"></td><td class="rr">14.0</td><td class="c">2019-03-11 09:49</td><td class="c">2019-03-28 17:00</td><td class="l">已完成</td><td class="rr">2</td><td class="rr"></td></tr><tr class="e"><td class="c">10</td><td class="c">装箱清单_...</td><td class="c"></td><td class="c"></td><td class="c">OK</td><td class="l">2019-000259---LED显示屏...</td><td class="c"></td><td class="rr">14.0</td><td class="c">2019-03-11 16:55</td><td class="c">2019-03-28 17:00</td><td class="l">已完成</td><td class="rr">2</td><td class="rr"></td></tr><tr><td class="c">11</td><td class="c">DA194003...</td><td class="c">同：JSRJ...</td><td class="c"></td><td class="c">OK</td><td class="l">DA1940034N---广西贵港至...</td><td class="c"></td><td class="rr">13.0</td><td class="c">2019-03-14 12:29</td><td class="c">2019-03-28 17:00</td><td class="l">已完成</td><td class="rr">1</td><td class="rr"></td></tr><tr class="e"><td class="c">12</td><td class="c">DA194003...</td><td class="c">同：JSRJ...</td><td class="c"></td><td class="c">OK</td><td class="l">DA1940034N---广西贵港至...</td><td class="c"></td><td class="rr">13.0</td><td class="c">2019-03-14 12:25</td><td class="c">2019-03-28 17:00</td><td class="l">已完成</td><td class="rr">1</td><td class="rr"></td></tr><tr><td class="c">13</td><td class="c"><svg class="bk" viewBox="0 0 12 12"><path d="M5.2 .6 H10.4 V1.7 Q7.7 3.1 7.7 6 Q7.7 8.9 10.4 10.3 V11.4 H5.2 Z"/></svg>DA1800...</td><td class="c"></td><td class="c"></td><td class="c">ok</td><td class="l"><svg class="bk" viewBox="0 0 12 12"><path d="M5.2 .6 H10.4 V1.7 Q7.7 3.1 7.7 6 Q7.7 8.9 10.4 10.3 V11.4 H5.2 Z"/></svg>DA1800658N-3追加项目...</td><td class="c"></td><td class="rr">14.0</td><td class="c">2019-03-18 08:34</td><td class="c">2019-03-28 16:30</td><td class="l">已完成</td><td class="rr">7</td><td class="rr"></td></tr><tr class="e"><td class="c">14</td><td class="c">DC17003...</td><td class="c"></td><td class="c"></td><td class="c">OK</td><td class="l">DC1700319N#13---Salesf...</td><td class="c"></td><td class="rr">11.5</td><td class="c">2019-03-12 11:05</td><td class="c">2019-03-27 17:00</td><td class="l">已完成</td><td class="rr">3</td><td class="rr"></td></tr></table><div id="hsb"><div class="th"></div><i class="lf"></i></div></div>
<div id="tabs"><div class="on"></div><span style="left:18px">基本属性</span><span style="left:86px">执行情况记录</span><span style="left:178px">[任务书]</span><span style="left:242px">输入</span><span style="left:286px">输出</span><span style="left:330px">[任务报告]</span><span style="left:406px">[隶属于]</span><span style="left:470px">[分项]</span><span style="left:522px">[合同]</span><span style="left:574px">[业内任务单]</span><span style="left:662px">[派工单]</span></div>
<div id="form"><div class="lb" style="left:10px;top:12px">名称</div><div class="f" style="left:102px;top:7px;width:474px">2019-000274---LED显示屏 OPT（美国）---出装箱清单</div><div class="lb" style="left:10px;top:41px">执行状态</div><div class="f" style="left:102px;top:36px;width:474px">已完成</div><div class="lb" style="left:10px;top:70px">计划工时</div><div class="f" style="left:102px;top:65px;width:474px">0</div><div class="lb" style="left:10px;top:99px">预期完成时间</div><div class="f" style="left:102px;top:94px;width:474px">2019-03-29 17:00</div><div class="lb" style="left:10px;top:128px">执行人</div><div class="f" style="left:102px;top:123px;width:474px">010687王丹</div><div class="lb" style="left:10px;top:157px">确认人</div><div class="f" style="left:102px;top:152px;width:474px">012934胡迟</div><div class="lb" style="left:10px;top:186px">预警时间</div><div class="f" style="left:102px;top:181px;width:474px">2019-03-28</div><div class="lb" style="left:10px;top:215px">实际完成时间</div><div class="f" style="left:102px;top:210px;width:474px">2019-03-11 16:58</div><div class="lb" style="left:586px;top:12px">实际工时</div><div class="f" style="left:678px;top:7px;width:430px">0.5</div><div class="lb" style="left:586px;top:41px">工期</div><div class="f" style="left:678px;top:36px;width:430px">14.0</div><div class="lb" style="left:586px;top:70px">实际开始时间</div><div class="f" style="left:678px;top:65px;width:430px">2019-03-11 16:54</div><div class="lb" style="left:586px;top:99px">进度</div><div class="f" style="left:678px;top:94px;width:430px">100</div><div class="lb" style="left:586px;top:128px">分配人</div><div class="f" style="left:678px;top:123px;width:430px">012934胡迟</div><div class="lb" style="left:586px;top:157px">提前预警(天)</div><div class="f" style="left:678px;top:152px;width:430px">1</div><div class="lb" style="left:586px;top:186px">实际结束时间</div><div class="f" style="left:678px;top:181px;width:430px">2019-03-11 16:55</div><div class="lb" style="left:586px;top:215px">创建时间</div><div class="f" style="left:678px;top:210px;width:430px">2019-03-11 12:57</div><div class="lb" style="left:10px;top:261px">拒绝原因</div><div class="f" style="left:102px;top:239px;width:474px;height:58px"></div><div class="lb" style="left:586px;top:261px">终止原因</div><div class="f" style="left:678px;top:239px;width:430px;height:58px"></div><div class="lb" style="left:10px;top:307px">备注</div><div class="f" style="left:102px;top:302px;width:474px"></div><div class="lb" style="left:586px;top:307px">原执行人</div><div class="f" style="left:678px;top:302px;width:430px"></div></div>
</body>
</html>
